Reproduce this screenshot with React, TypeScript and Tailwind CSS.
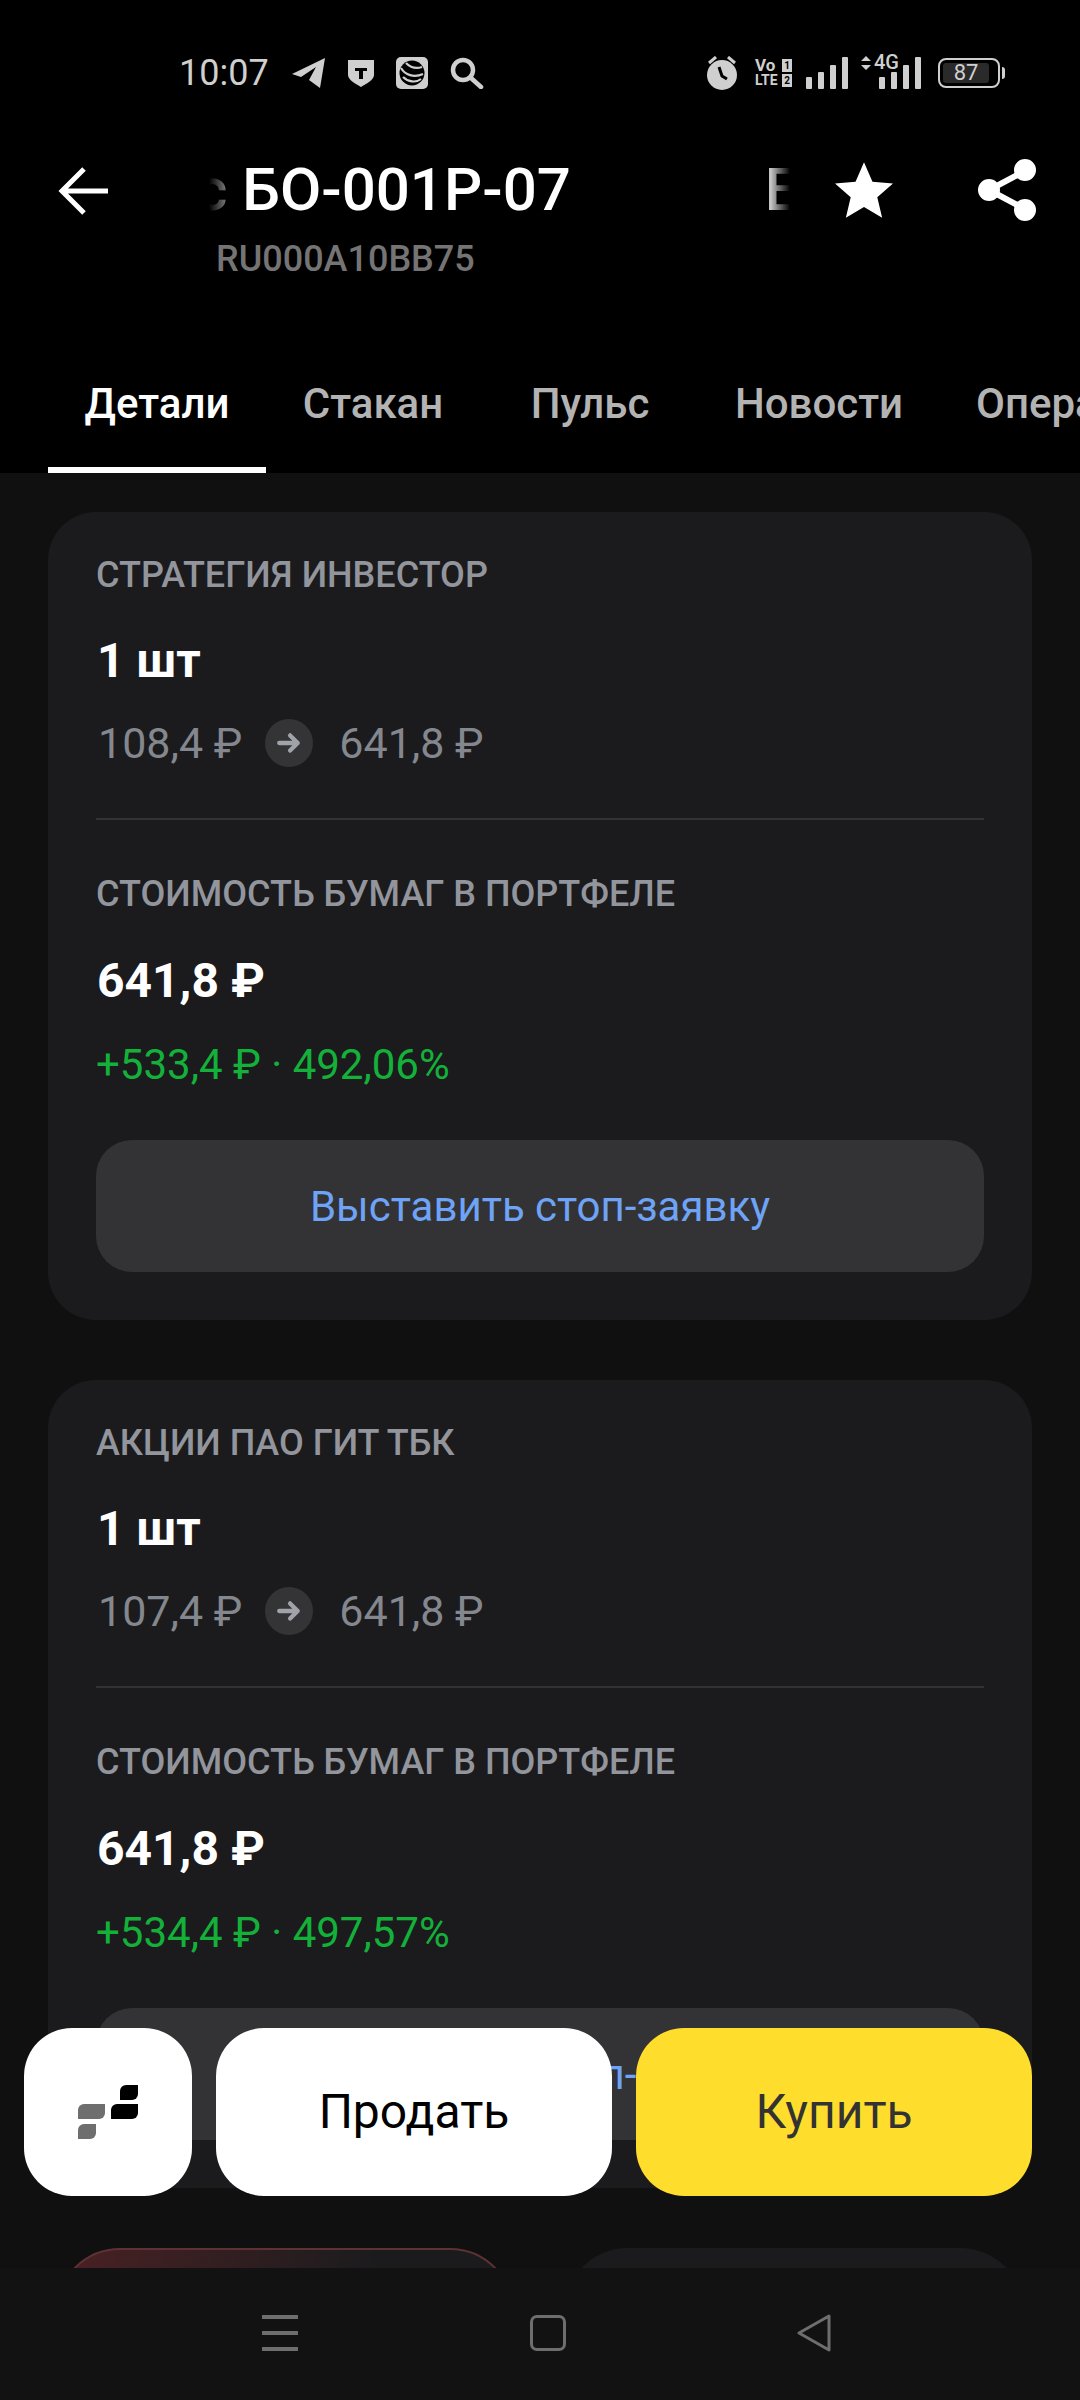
import React from "react";

function Card({ title, from, pl, pct }: { title: string; from: string; pl: string; pct: string }) {
  return (
    <div className="rounded-[48px] bg-[#1b1b1d] px-12 pt-[43px] pb-12 h-[808px] shrink-0">
      <div className="text-[36px] leading-[40px] font-medium text-[#92959c]">{title}</div>
      <div className="mt-[38px] text-[48px] leading-[56px] font-bold text-white pl-[1px]">1 шт</div>
      <div className="mt-[26px] flex items-center h-[56px] pl-[2px] text-[43px] text-[#84878e]">
        <span>{from}</span>
        <span className="ml-[23px] mr-[26px] flex h-12 w-12 items-center justify-center rounded-full bg-[#343436]">
          <svg width="26" height="26" viewBox="0 0 24 24" fill="none" stroke="#a0a3a9" strokeWidth="4" strokeLinecap="round" strokeLinejoin="round">
            <path d="M3 12h17M13 5l7 7-7 7" />
          </svg>
        </span>
        <span>641,8 ₽</span>
      </div>
      <div className="mt-[47px] h-[2px] bg-[#333336]" />
      <div className="mt-[54px] text-[36px] leading-[40px] font-medium text-[#92959c]">СТОИМОСТЬ БУМАГ В ПОРТФЕЛЕ</div>
      <div className="mt-[39px] text-[48px] leading-[56px] font-bold text-white pl-[1px]">641,8 ₽</div>
      <div className="mt-[32px] text-[42px] leading-[48px] text-[#14b13a]">{pl} · {pct}</div>
      <div className="mt-[51px] flex h-[132px] items-center justify-center rounded-[36px] bg-[#333335] text-[42px] text-[#6ea3f5]">
        Выставить стоп-заявку
      </div>
    </div>
  );
}

function StatusBar() {
  const bars = (
    <>
      <rect x="0" y="20" width="6" height="12" rx="1" />
      <rect x="12" y="15" width="6" height="17" rx="1" />
      <rect x="24" y="8" width="6" height="24" rx="1" />
      <rect x="36" y="0" width="6" height="32" rx="1" />
    </>
  );
  return (
    <div className="flex h-[94px] shrink-0 items-end text-[#cfcfcf] pl-[179px]">
      <span className="text-[36px] leading-[42px] w-[113px]">10:07</span>
      <div className="flex items-center gap-[22px] h-[42px]">
        <svg width="34" height="30" viewBox="0 0 34 30" fill="#cfcfcf"><path d="M0 16 33 0 28 30 17 22 24 9 9 19Z" /></svg>
        <svg width="26" height="27" viewBox="0 0 26 27"><path d="M0 0h26v15c0 5-8 9-13 12C8 24 0 20 0 15Z" fill="#cfcfcf" /><path d="M7 8h12v3h-4v8h-4v-8H7Z" fill="#000" /></svg>
        <svg width="32" height="32" viewBox="0 0 32 32"><rect width="32" height="32" rx="5" fill="#cfcfcf" /><circle cx="16" cy="16" r="12.500" fill="#000" /><path d="M5 11c4 7 13 10 22 6M7 20c5 5 13 6 18 2M10 6c4 4 10 6 16 4" stroke="#cfcfcf" strokeWidth="2.2" fill="none" /></svg>
        <svg width="34" height="32" viewBox="0 0 34 32" fill="none" stroke="#cfcfcf" strokeWidth="4.5" strokeLinecap="round"><circle cx="13" cy="13" r="10" /><path d="M21 21l10 9" /></svg>
      </div>
      <div className="ml-auto flex items-center h-[42px] pr-[75px]">
        <svg width="32" height="34" viewBox="0 0 32 34"><path d="M3 7 10 1M29 7 22 1" stroke="#cfcfcf" strokeWidth="3" /><circle cx="16" cy="19" r="15" fill="#cfcfcf" /><path d="M13 11l3 9 5 3" stroke="#000" strokeWidth="3" fill="none" /></svg>
        <div className="ml-[17px] w-[37px] flex flex-col font-bold leading-[15px]">
          <div className="flex justify-between items-center text-[17px]"><span>Vo</span><span className="bg-[#cfcfcf] text-black w-[10px] h-[13px] flex items-center justify-center text-[10px]">1</span></div>
          <div className="flex justify-between items-center text-[14px]"><span>LTE</span><span className="bg-[#cfcfcf] text-black w-[10px] h-[13px] flex items-center justify-center text-[10px]">2</span></div>
        </div>
        <svg className="ml-[14px]" width="42" height="32" viewBox="0 0 42 32" fill="#cfcfcf">{bars}</svg>
        <div className="relative ml-[13px] h-[32px] w-[60px]">
          <svg className="absolute left-[18px] top-0" width="42" height="32" viewBox="0 0 42 32" fill="#cfcfcf">{bars}</svg>
          <svg className="absolute left-0 -top-[1px]" width="10" height="14" viewBox="0 0 10 14" fill="#cfcfcf"><path d="M5 0l5 5H0ZM5 14 0 9h10Z" /></svg>
          <span className="absolute left-[13px] -top-[5px] text-[20px] leading-[20px] font-medium">4G</span>
        </div>
        <div className="ml-[17px] flex h-[30px] w-[62px] items-center rounded-[8px] border-2 border-[#cfcfcf] p-[3px]">
          <div className="flex h-full w-[46px] items-center justify-center rounded-[3px] bg-[#2a2a2a] text-[22px] leading-none">87</div>
        </div>
        <div className="ml-[2px] h-[12px] w-[3px] rounded-r-sm bg-[#cfcfcf]" />
      </div>
    </div>
  );
}

function Tab({ label, active, className }: { label: string; active?: boolean; className: string }) {
  return (
    <div className={`relative flex shrink-0 h-full items-center justify-center ${className} ${active ? "text-white border-b-[6px] border-white pt-[2px]" : "text-[#b3b3b3] pb-[4px]"}`}>
      {label}
    </div>
  );
}

export default function App() {
  return (
    <div className="relative flex h-[2400px] w-[1080px] flex-col overflow-hidden bg-black" style={{ fontFamily: "Roboto, 'Noto Sans', sans-serif" }}>
      <StatusBar />
      <div className="flex h-[177px] items-start shrink-0">
        <div className="ml-[58px] mt-[71px] w-[52px] h-[52px] shrink-0">
          <svg width="52" height="52" viewBox="0 0 52 52" fill="none" stroke="#fff" strokeWidth="5"><path d="M50 26H6M26 4 4 26l22 22" /></svg>
        </div>
        <div className="ml-[95px] mt-[61px] w-[585px] shrink-0">
          <div className="text-[60px] leading-[70px] font-medium text-white flex overflow-hidden h-[70px] w-[585px] [mask-image:linear-gradient(to_right,transparent_4px,black_40px,black_560px,transparent_585px)]">
            <span className="whitespace-nowrap shrink-0 -ml-[9px]">с БО-001Р-07</span>
            <span className="ml-[194px] shrink-0">Е</span>
          </div>
          <div className="mt-[14px] pl-[11px] text-[36px] leading-[40px] font-medium text-[#747474]">RU000A10BB75</div>
        </div>
        <svg className="ml-[45px] mt-[68px] shrink-0" width="58" height="56" viewBox="0 0 24 23" fill="#fff"><path d="M12 0l3.5 8.1 8.5.7-6.5 5.7 2 8.5-7.5-4.5L4.500 23l2-8.500L0 8.800l8.500-.7Z" /></svg>
        <svg className="ml-[85px] mt-[65px] shrink-0" width="58" height="62" viewBox="0 0 58 62" fill="none" stroke="#fff" strokeWidth="6">
          <path d="M47 12 11 31l36 19" />
          <circle cx="47" cy="11" r="8" fill="#fff" />
          <circle cx="11" cy="31" r="8" fill="#fff" />
          <circle cx="47" cy="51" r="8" fill="#fff" />
        </svg>
      </div>
      <div className="flex h-[202px] shrink-0 items-end">
        <div className="flex h-[136px] pl-[48px] text-[42px] font-medium w-full overflow-hidden whitespace-nowrap">
          <Tab label="Детали" active className="w-[218px]" />
          <Tab label="Стакан" className="w-[214px]" />
          <Tab label="Пульс" className="w-[220px]" />
          <Tab label="Новости" className="w-[238px]" />
          <Tab label="Операции" className="ml-[38px]" />
        </div>
      </div>
      <div className="flex-1 overflow-hidden bg-[#101011] px-12 pt-[39px] flex flex-col gap-[60px]">
        <Card title="СТРАТЕГИЯ ИНВЕСТОР" from="108,4 ₽" pl="+533,4 ₽" pct="492,06%" />
        <Card title="АКЦИИ ПАО ГИТ ТБК" from="107,4 ₽" pl="+534,4 ₽" pct="497,57%" />
        <div className="flex gap-[50px] pl-[8px] shrink-0">
          <div className="h-[300px] w-[458px] rounded-[64px] border-2 border-[#5e3135] bg-gradient-to-r from-[#4a2024] to-[#1b1b1d] to-70%" />
          <div className="h-[300px] w-[460px] rounded-[64px] bg-[#1b1b1d]" />
        </div>
      </div>
      <div className="flex h-[132px] shrink-0 items-center bg-[#121212] pb-[3px]">
        <div className="ml-[262px] flex h-[36px] w-[36px] flex-col justify-between">
          <div className="h-[4px] bg-[#6e6e6e]" />
          <div className="h-[4px] bg-[#6e6e6e]" />
          <div className="h-[4px] bg-[#6e6e6e]" />
        </div>
        <div className="ml-[232px] h-[36px] w-[36px] rounded-[7px] border-[3px] border-[#6e6e6e]" />
        <svg className="ml-[230px]" width="36" height="38" viewBox="0 0 36 38" fill="none" stroke="#6e6e6e" strokeWidth="3" strokeLinejoin="round"><path d="M33 2 3 19l30 17Z" /></svg>
      </div>
      <div className="absolute left-6 top-[2028px] flex h-[168px] gap-6">
        <div className="flex h-[168px] w-[168px] items-center justify-center rounded-[48px] bg-white">
          <svg width="60" height="54" viewBox="0 0 60 54">
            <path d="M48 0h12v9a6 6 0 0 1-6 6H42V6a6 6 0 0 1 6-6Z" fill="#000" />
            <path d="M39 19h21v9a6 6 0 0 1-6 6H33v-9a6 6 0 0 1 6-6Z" fill="#000" />
            <path d="M6 19h21v9a6 6 0 0 1-6 6H0v-9a6 6 0 0 1 6-6Z" fill="#6e6e6e" />
            <path d="M6 39h12v9a6 6 0 0 1-6 6H0v-9a6 6 0 0 1 6-6Z" fill="#6e6e6e" />
          </svg>
        </div>
        <div className="flex h-[168px] w-[396px] items-center justify-center rounded-[48px] bg-white text-[48px] text-black">Продать</div>
        <div className="flex h-[168px] w-[396px] items-center justify-center rounded-[48px] bg-[#ffdd2d] text-[48px] text-[#333]">Купить</div>
      </div>
    </div>
  );
}
